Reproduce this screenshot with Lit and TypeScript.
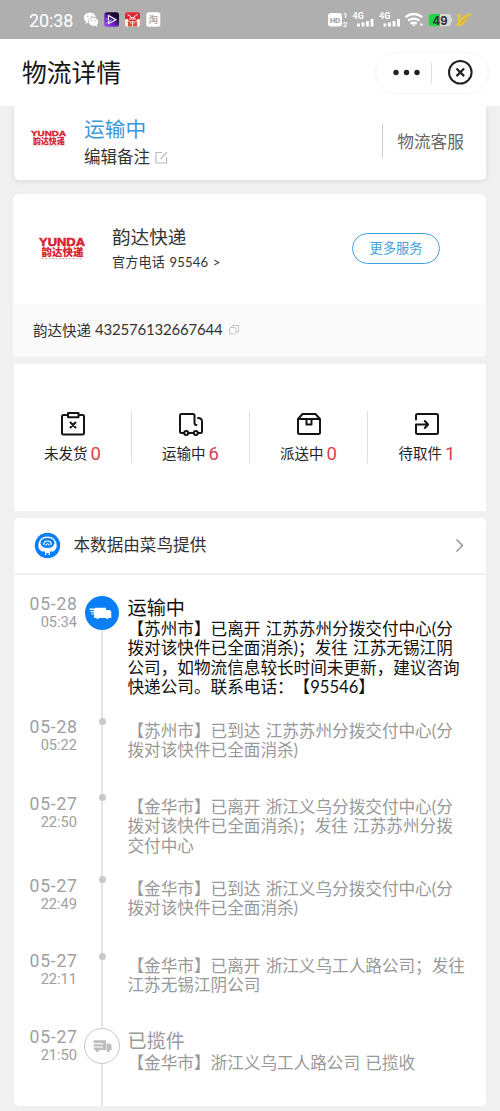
import { LitElement, html, css, svg, nothing } from "lit";
import { customElement, property } from "lit/decorators.js";

interface TrackEvent {
  date: string;
  time: string;
  title?: string;
  lines: string[];
  size: string;
  kind: "current" | "past" | "start";
}

const EVENTS: TrackEvent[] = [
  {
    date: "05-28", time: "05:34", title: "运输中", size: "r1", kind: "current",
    lines: [
      "【苏州市】已离开 江苏苏州分拨交付中心(分",
      "拨对该快件已全面消杀)；发往 江苏无锡江阴",
      "公司，如物流信息较长时间未更新，建议咨询",
      "快递公司。联系电话：【95546】",
    ],
  },
  { date: "05-28", time: "05:22", size: "r2", kind: "past", lines: ["【苏州市】已到达 江苏苏州分拨交付中心(分", "拨对该快件已全面消杀)"] },
  { date: "05-27", time: "22:50", size: "r3", kind: "past", lines: ["【金华市】已离开 浙江义乌分拨交付中心(分", "拨对该快件已全面消杀)；发往 江苏苏州分拨", "交付中心"] },
  { date: "05-27", time: "22:49", size: "r4", kind: "past", lines: ["【金华市】已到达 浙江义乌分拨交付中心(分", "拨对该快件已全面消杀)"] },
  { date: "05-27", time: "22:11", size: "r5", kind: "past", lines: ["【金华市】已离开 浙江义乌工人路公司；发往", "江苏无锡江阴公司"] },
  { date: "05-27", time: "21:50", title: "已揽件", size: "r6", kind: "start", lines: ["【金华市】浙江义乌工人路公司 已揽收"] },
];

@customElement("yunda-logo")
export class YundaLogo extends LitElement {
  static styles = css`
    :host { display: block; }
    svg { display: block; width: 100%; height: 100%; overflow: visible; }
    .en { font: 700 10.500px "Liberation Sans", sans-serif; fill: #d8232e; stroke: #d8232e; stroke-width: .5px; }
    .cn { font: 900 10.500px "Liberation Sans", "Noto Sans CJK SC", sans-serif; fill: #d8232e; }
  `;
  render() {
    return html`<svg viewBox="0 0 46 22" preserveAspectRatio="none">
      <text class="en" x="0" y="8" textLength="46" lengthAdjust="spacingAndGlyphs">YUNDA</text>
      <text class="cn" x="2.5" y="18.4" textLength="42" lengthAdjust="spacingAndGlyphs">韵达快递</text>
      <path d="M3 20.6H44" stroke="#e58a8e" stroke-width="1" stroke-dasharray="1.6 1.8"/>
    </svg>`;
  }
}

@customElement("status-bar")
export class StatusBar extends LitElement {
  static styles = css`
    :host { display: flex; height: 39px; background: #afafaf; color: #fff; box-sizing: border-box; padding: 0 27px 0 29px; align-items: center; justify-content: space-between; }
    .left { display: flex; align-items: center; }
    .time { font: 400 18px/24px Roboto, sans-serif; width: 54px; white-space: nowrap; letter-spacing: -0.1px; padding-top: 2px; }
    svg { display: block; }
    .b { font: 700 8px Roboto, sans-serif; fill: #fff; }
    .g4 { font-size: 9px; }
    .hd { font: 700 8px Roboto, sans-serif; fill: #a0a0a0; }
    .bat { font: 700 12px Inter, sans-serif; fill: #333; }
    .tao { font: 700 9.500px "Liberation Sans", "Noto Sans CJK SC", sans-serif; fill: #aaa; }
  `;
  signal(x: number) {
    return svg`<g transform="translate(${x} 0)">
      <text class="b g4" x="-0.5" y="19" textLength="11.5">4G</text>
      <path d="M5.500 23.500v3M10 22.500v4M14.500 21v5.500M19 19v7.500" stroke="#fff" stroke-width="2.800"/>
    </g>`;
  }
  render() {
    return html`
      <div class="left">
        <span class="time">20:38</span>
        <svg width="78" height="39" viewBox="83 0 78 39">
          <ellipse cx="89.8" cy="17.6" rx="6" ry="5.2" fill="#fff"/><path d="M86 21l-.6 3 3.2-2z" fill="#fff"/>
          <ellipse cx="93.5" cy="21.8" rx="5" ry="4.4" fill="#fff" stroke="#afafaf" stroke-width=".8"/><path d="M95 25.5l2.3 1.3-.6-2.8z" fill="#fff"/>
          <g fill="#afafaf"><circle cx="87.8" cy="16.2" r=".8"/><circle cx="91.7" cy="16.2" r=".8"/><circle cx="91.8" cy="20.8" r=".7"/><circle cx="95.1" cy="20.8" r=".7"/></g>
          <defs><linearGradient id="g" x1="0" y1="1" x2=".8" y2="0"><stop offset="0" stop-color="#a04bff"/><stop offset=".5" stop-color="#5c1fae"/><stop offset=".8" stop-color="#170a2c"/></linearGradient></defs>
          <rect x="104.300" y="12.300" width="14.700" height="14.400" rx="2.500" fill="url(#g)"/>
          <path d="M108.500 15.500v8l7.500-3.800z" fill="#3b1b90" stroke="#fff" stroke-width="1.100"/><path d="M106 18.500l5 2.500M106 23.500l6-4" stroke="#e9a8ff" stroke-width=".8"/>
          <rect x="125" y="12.300" width="15" height="14.400" rx="2" fill="#f6e9df"/>
          <path d="M125 14.300q0-2 2-2h11q2 0 2 2V19h-2.500l-1.500 2h-7l-1.500-2H125z" fill="#dc2632"/><path d="M127.500 14.500l3.500 2.200M137.500 14.500l-3.500 2.200M129 19h7M130.500 17.500h4" stroke="#fff"/>
          <path d="M128 21.500h9v5h-9z" fill="#df4a3a"/><path d="M132.500 21v5.500M130 23h1.500M133.500 23h1.500" stroke="#fff" stroke-width=".9"/>
          <rect x="146.300" y="12.300" width="14" height="14.400" rx="2.500" fill="#fff"/>
          <text class="tao" x="148.500" y="23">淘</text>
        </svg>
      </div>
      <svg width="146" height="39" viewBox="327 0 146 39">
        <rect x="328" y="13" width="14" height="13.500" rx="3" fill="#fff"/>
        <text class="hd" x="329.700" y="22.600" textLength="10.600">HD</text>
        <text class="b" x="343" y="18.300">1</text><text class="b" x="342.700" y="26.600">2</text>
        ${this.signal(353)}${this.signal(379.5)}
        <g fill="none" stroke="#fff" stroke-width="2.300"><path d="M405.300 17.200q8.500-6.400 17 0"/><path d="M408 20.600q5.800-4 11.400 0"/><path d="M410.600 23.800q3.200-2.200 6.200 0"/></g>
        <path d="M411.800 24.500h4l-2 2z" fill="#fff"/><circle cx="421.500" cy="24.500" r="1.300" fill="#fff"/>
        <path d="M431.500 14H448q3 0 3 3v.8q1.500 0 1.500 2.200t-1.500 2.200v1q0 3-3 3H431.500q-3 0-3-3V17q0-3 3-3z" fill="#d8d8d8"/>
        <path d="M431.500 14H440v12.200h-8.500q-3 0-3-3V17q0-3 3-3z" fill="#24d34b"/>
        <text class="bat" x="432.500" y="24.600" textLength="15" lengthAdjust="spacingAndGlyphs">49</text>
        <path d="M457.500 14.500l3.500-1.300-.8 5.300 7-4.500 5-.5-5 5-3 5.500-5 2.500-3-1.500 2-4z" fill="#e8c43c"/><path d="M460 23.500l7.500-7" stroke="#b8a45a"/>
      </svg>`;
  }
}

@customElement("order-stat")
export class OrderStat extends LitElement {
  static styles = css`
    :host { display: flex; flex-direction: column; align-items: center; }
    svg { display: block; flex: none; width: 26px; height: 26px; fill: none; stroke: #151515; stroke-width: 2; stroke-linejoin: round; stroke-linecap: round; }
    .row { display: flex; flex: none; align-items: center; height: 24px; margin-top: 5px; gap: 3px; white-space: nowrap; font: 14.500px/24px Lato, "Noto Sans CJK SC", sans-serif; color: #222; }
    .n { font: 18.500px/24px Roboto, sans-serif; color: #d8434b; }
  `;
  @property() label = "";
  @property() count = "";
  @property() icon = "";
  glyph() {
    switch (this.icon) {
      case "clip":
        return svg`<path d="M7 4H3.500a1.500 1.500 0 0 0-1.500 1.500V22a1.500 1.500 0 0 0 1.500 1.500h19A1.500 1.500 0 0 0 24 22V5.500A1.500 1.500 0 0 0 22.500 4H19"/><path d="M8 2h10.500v4.300H8zM10.500 11.500l5 5M15.500 11.500l-5 5"/>`;
      case "truck":
        return svg`<path d="M5.500 22H3.500Q2 22 2 20.500V4.500Q2 3 3.500 3H15q1.500 0 1.500 1.500V12q0 2 2 2M11 22h4M20 22h2.500q1.500 0 1.500-1.500V10.500Q24 7 20 7"/><circle cx="8.200" cy="22" r="2"/><circle cx="17.800" cy="22" r="2"/>`;
      case "box":
        return svg`<path d="M2 8L6.500 3h13L24 8V21.500q0 1.500-1.500 1.500h-19Q2 23 2 21.500zM2 8H24M10.500 8v5.500h5V8"/>`;
      default:
        return svg`<path d="M2 8.500V4.500Q2 3 3.500 3h19Q24 3 24 4.500V21.500q0 1.500-1.500 1.500h-19Q2 23 2 21.500V13.500H13.500M10.800 10l3.300 3.500-3.300 3.500"/>`;
    }
  }
  render() {
    return html`<svg viewBox="0 0 26 26">${this.glyph()}</svg>
      <div class="row"><span>${this.label}</span><span class="n">${this.count}</span></div>`;
  }
}

@customElement("track-row")
export class TrackRow extends LitElement {
  static styles = css`
    :host { display: block; }
    .row { display: grid; grid-template-columns: 63px 50px 1fr; height: 100%; color: #999; }
    .when { text-align: right; font-family: Roboto, sans-serif; font-weight: 400; white-space: nowrap; color: #a0a0a0; }
    .date { font-size: 17.600px; line-height: 20px; letter-spacing: .75px; margin-right: -0.75px; }
    .time { font-size: 14.600px; line-height: 16px; }
    .rail { display: flex; flex-direction: column; align-items: center; }
    .lead { width: 2px; height: 1px; background: #e5e5e5; }
    .line { width: 2px; flex: 1; background: #e5e5e5; }
    .dot { width: 7px; height: 7px; border-radius: 50%; background: #c9c9c9; flex: none; }
    .badge { width: 34px; height: 34px; border-radius: 50%; background: #0a7ff5; flex: none; margin-top: 2px; }
    .badge.hollow { width: 36px; height: 36px; box-sizing: border-box; border: 1.500px solid #c8c8c8; background: #fff; margin-top: 1px; }
    svg { display: block; width: 100%; height: 100%; }
    .body { font: 16.620px/19.500px Lato, "Noto Sans CJK SC", sans-serif; text-spacing-trim: space-all; word-spacing: 1px; white-space: nowrap; padding: 4.500px 0 0 .500px; }
    .title { font-size: 19.200px; line-height: 22px; margin-top: -2px; height: 23px; }
    .r6 .title { height: 24px; }
    .current .body { color: #111; }
    .r3 .when, .r4 .when { padding-top: 1px; }
    .r5 .when { margin-top: -1px; }
  `;
  @property({ attribute: false }) event!: TrackEvent;
  marker() {
    if (this.event.kind === "current") {
      return html`<div class="badge"><svg viewBox="0 0 34 34"><path d="M10 11.800h11v2.200h4l1.300 2v6h-2.500a1.700 1.700 0 0 1-3 0h-6.600a1.700 1.700 0 0 1-3 0H9v-3.400H6.500v-1.200H9v-1.200H5.500v-1.200H9v-1H4.500v-1.400H10z" fill="#fff"/></svg></div>`;
    }
    if (this.event.kind === "start") {
      return html`<div class="badge hollow"><svg viewBox="0 0 33 33"><path d="M8.500 11h12v9.500h-12zM21 14h3.300l1.500 2v4.500H21z" fill="#bdbdbd"/><path d="M8.500 14.200h9M8.500 17.500h9" stroke="#fff" stroke-width="1"/><circle cx="12" cy="20.800" r="1.600" fill="#bdbdbd"/><circle cx="22.500" cy="20.800" r="1.600" fill="#bdbdbd"/></svg></div>`;
    }
    return html`<div class="lead"></div><div class="dot"></div>`;
  }
  render() {
    const e = this.event;
    return html`<div class="row ${e.kind} ${e.size}">
      <div class="when"><div class="date">${e.date}</div><div class="time">${e.time}</div></div>
      <div class="rail">${this.marker()}<div class="line"></div></div>
      <div class="body">${e.title ? html`<div class="title">${e.title}</div>` : nothing}${e.lines.map((l) => html`<div>${l}</div>`)}</div>
    </div>`;
  }
}

@customElement("app-root")
export class AppRoot extends LitElement {
  static styles = css`
    :host { display: flex; flex-direction: column; width: 500px; height: 1111px; overflow: hidden; background: #f0f0f0; font-family: Lato, "Noto Sans CJK SC", sans-serif; color: #333; white-space: nowrap; }
    * { box-sizing: border-box; }
    svg { display: block; }
    .nav { height: 67px; flex: none; background: #fff; display: flex; align-items: center; justify-content: space-between; padding: 0 11px 0 22px; }
    .nav h1 { margin: 0; font-size: 24.800px; font-weight: 400; line-height: 36px; color: #161616; }
    .capsule { width: 114px; height: 42px; border: 1px solid #f5f5f5; border-radius: 21px; }
    .card { background: #fff; margin: 0 14px; flex: none; }
    .summary { height: 74px; display: flex; border-radius: 0 0 5px 5px; box-shadow: 0 1px 5px #d8d8d8; clip-path: inset(0 -8px -8px -8px); padding-left: 17px; }
    .summary yunda-logo { width: 35px; height: 17px; margin-top: 24px; }
    .state { margin-left: 18px; padding-top: 11px; flex: 1; }
    .blue { color: #3a97da; font-size: 20.700px; line-height: 25px; }
    .note { display: flex; align-items: center; gap: 5px; font-size: 16.500px; line-height: 24px; margin-top: 3px; }
    .service { border-left: 1.500px solid #ccc; height: 34px; margin-top: 18px; padding: 0 22px 0 14px; line-height: 36px; font-size: 16.700px; color: #666; }
    .carrier { margin: 14px 14px 0 13px; height: 163px; border-radius: 6px; overflow: hidden; }
    .top { height: 110px; display: flex; padding: 0 46px 0 26px; }
    .top yunda-logo { width: 46px; height: 22px; margin-top: 44px; }
    .who { flex: 1; margin-left: 27px; padding-top: 29px; }
    .name { font-size: 18.600px; line-height: 28px; }
    .tel { font-size: 13.100px; line-height: 22px; letter-spacing: .15px; word-spacing: 1px; }
    .more { width: 88px; height: 31px; margin-top: 38.500px; border: 1.500px solid #3f9fdc; border-radius: 16px; background: none; color: #3f9fdc; font: 13.300px/27px Lato, "Noto Sans CJK SC", sans-serif; padding: 0; }
    .number { height: 53px; background: #fafafa; display: flex; align-items: center; padding: 0 0 3px 20px; font-size: 14.500px; }
    .digits { font: 15px/20px Lato, sans-serif; letter-spacing: -.2px; width: 128px; margin: 0 6px 0 4px; }
    .stats { margin-top: 7px; height: 147px; display: grid; grid-template-columns: repeat(4, 1fr); padding-top: 47px; }
    .stats > * { height: 52px; border-right: 1.500px solid #e0e0e0; }
    .stats > :last-child { border-right: 0; }
    .track { margin-top: 7px; height: 588px; border-radius: 5px; }
    .source { height: 57px; border-bottom: 2px solid #f0f0f0; display: flex; align-items: center; padding: 0 22px 0 19.500px; font-size: 16.600px; }
    .source span { flex: 1; margin-left: 13px; padding-bottom: 2.500px; }
    .rows { padding-top: 19px; }
    .r1 { height: 123px; }
    .r2 { height: 76px; }
    .r3 { height: 82px; }
    .r4 { height: 77px; }
    .r5 { height: 75px; }
    .r6 { height: 79px; }
  `;
  render() {
    return html`
      <status-bar></status-bar>
      <header class="nav">
        <h1>物流详情</h1>
        <div class="capsule"><svg width="112" height="40" viewBox="0 0 112 40">
          <g fill="#222"><circle cx="20" cy="19.500" r="2.700"/><circle cx="30.500" cy="19.500" r="2.700"/><circle cx="41" cy="19.500" r="2.700"/></g>
          <path d="M55.500 9.500v21" stroke="#ddd"/>
          <circle cx="84.300" cy="19.300" r="11.300" fill="none" stroke="#222" stroke-width="2"/>
          <path d="M80.500 15.500l7.600 7.600M88.100 15.500l-7.600 7.600" stroke="#222" stroke-width="2.200"/>
        </svg></div>
      </header>
      <section class="card summary">
        <yunda-logo></yunda-logo>
        <div class="state">
          <div class="blue">运输中</div>
          <div class="note">编辑备注<svg width="13" height="13" viewBox="0 0 13 13" fill="none" stroke="#bbb" stroke-width="1.200"><path d="M7 1.500H1v10.500h10.500V6M5.500 8L12 1"/></svg></div>
        </div>
        <div class="service">物流客服</div>
      </section>
      <section class="card carrier">
        <div class="top">
          <yunda-logo></yunda-logo>
          <div class="who"><div class="name">韵达快递</div><div class="tel">官方电话 95546 &gt;</div></div>
          <button class="more">更多服务</button>
        </div>
        <div class="number">韵达快递<span class="digits">432576132667644</span><svg width="10" height="11" viewBox="0 0 10 11" fill="none" stroke="#c4c4c4"><rect x=".5" y="3.500" width="6.500" height="6.500" rx="1.200"/><path d="M3 3V1.500h6.500V8H7.500"/></svg></div>
      </section>
      <section class="card stats">
        <order-stat icon="clip" label="未发货" count="0"></order-stat>
        <order-stat icon="truck" label="运输中" count="6"></order-stat>
        <order-stat icon="box" label="派送中" count="0"></order-stat>
        <order-stat icon="enter" label="待取件" count="1"></order-stat>
      </section>
      <section class="card track">
        <div class="source">
          <svg width="27" height="27" viewBox="0 0 27 27"><circle cx="13.500" cy="13.500" r="12.700" fill="#0a7ff5"/><path d="M4.300 13.500Q5 4.500 13.500 4.500t9.200 9q0 4-3.700 6h-3v3.500h-1.300V21h-2.400v2H11v-3.500H8q-3.700-2-3.700-6z" fill="#fff"/><path d="M6.500 11.500q0-5.500 7-5.500t7 5.500q-1.500 4.500-7 4.500t-7-4.500z" fill="#0a7ff5"/><path d="M9.800 12.500q0-3.500 3.700-3.500t3.700 3.500M11.800 13q1.700-2.500 3.400 0" fill="none" stroke="#fff" stroke-width="1.200" stroke-linecap="round"/></svg>
          <span>本数据由菜鸟提供</span>
          <svg width="9" height="15" viewBox="0 0 9 15" fill="none" stroke="#888" stroke-width="1.300"><path d="M1.500 1.500l6 6-6 6"/></svg>
        </div>
        <div class="rows">${EVENTS.map((e) => html`<track-row class=${e.size} .event=${e}></track-row>`)}</div>
      </section>`;
  }
}
